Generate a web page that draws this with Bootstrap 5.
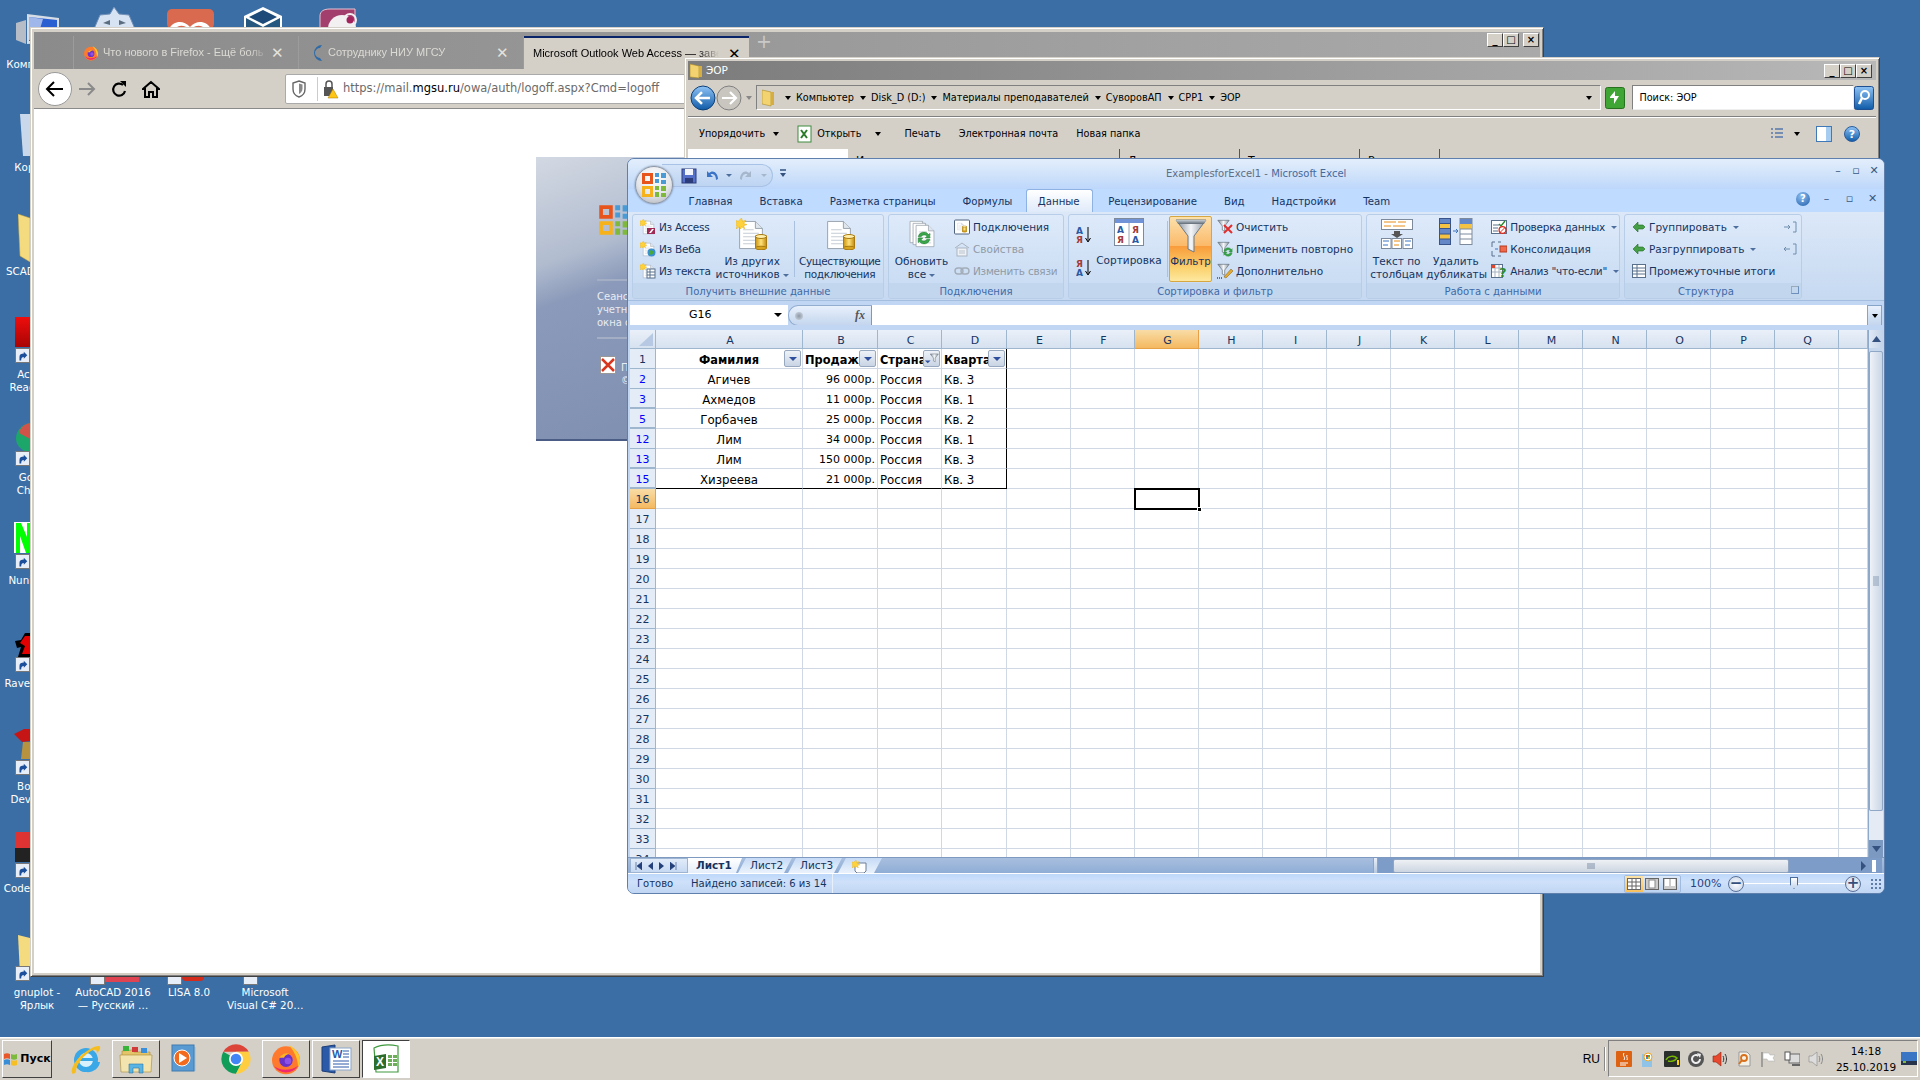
<!DOCTYPE html>
<html lang="ru">
<head>
<meta charset="UTF-8" />
<title>ExamplesforExcel1 - Microsoft Excel</title>
<link href="https://cdn.jsdelivr.net/npm/bootstrap@5.3.2/dist/css/bootstrap.min.css" rel="stylesheet" />
<style>
body{margin:0;width:1920px;height:1080px;overflow:hidden;background:#3a6ea5;font-family:"DejaVu Sans","Noto Sans",sans-serif;font-size:10.5px;line-height:1.2;color:#000}
.desktop{width:1920px;height:1080px}
.area{height:1037px}
.defs{position:absolute;width:0;height:0}
/* desktop icons */
.dicon{position:absolute;width:76px;color:#fff;text-align:center;font-size:10.3px;line-height:13px;white-space:nowrap}
.clip-top{position:absolute}
.shortcut{position:absolute;width:15px;height:15px;background:#e8eef7;border:1px solid #777}
/* classic windows */
.win{position:absolute;background:#d4d0c8;border:1px solid;border-color:#d4d0c8 #404040 #404040 #d4d0c8;box-shadow:inset 1px 1px 0 #fff,inset -1px -1px 0 #808080}
.capbtn{width:16px;height:14px;background:#d4d0c8;border:1px solid;border-color:#fff #404040 #404040 #fff;display:flex;align-items:center;justify-content:center;font-size:10px;line-height:10px;font-weight:700;color:#000}
.ff{left:30px;top:27px;width:1514px;height:950px;padding:4px 3px 3px 3px}
.ff-tabs{height:37px;background:linear-gradient(90deg,#8b8b8b,#a9a9a9)}
.ff-space{width:40px;border-right:1px solid #9c9c9c;margin-top:4px}
.ff-tab{width:225px;height:33px;margin-top:4px;padding:0 9px;color:#dcdad4;font-size:11px;font-family:"Liberation Sans",sans-serif;border-right:1px solid #9c9c9c}
.ff-tab svg{flex:none}
.ff-tab .tt{width:166px;overflow:hidden;white-space:nowrap;-webkit-mask-image:linear-gradient(90deg,#000 88%,transparent)}
.ff-tab .x{font-size:15px;color:#e4e2dc;margin-left:auto;margin-right:5px}
.ff-tab.on{background:#d4d0c8;color:#000;border-top:2px solid #0a246a;border-right:0;height:33px;padding-right:5px}
.ff-tab.on .tt{width:186px}
.ff-tab.on .x{color:#000;margin-right:3px}
.ff-plus{font-size:19px;color:#c9c9c9;margin-left:7px;line-height:1}
.ff-btns{margin:1px 1px 0 auto;height:14px}
.ff-bar{height:40px;border-bottom:1px solid #8a8a8a;padding-left:4px}
.ff-back{width:34px;height:34px;border-radius:50%;background:#fff;border:1px solid #999}
.ff-tool{width:32px}
.ff-tool.first{margin-left:-1px}
.ff-url{margin-left:118px;flex:1;height:30px;background:#fff;border:1px solid #aaa;border-radius:2px;font-size:11.5px;color:#6a6a6a;padding-left:6px;white-space:nowrap}
.ff-url b{font-weight:400;color:#000}
.ff-sep{width:1px;height:24px;background:#ccc;margin:0 5px 0 7px}
.ff-page{background:#fff}
.owa{position:absolute;left:502px;top:48px;width:230px;height:284px;background:linear-gradient(160deg,#d3d9e3 0%,#b1bccf 30%,#8b9aba 42%,#7d8dae 100%);border-right:2px solid #506080;border-bottom:2px solid #4b5d84;color:#e8ecf3;font-size:10px;line-height:13px;white-space:nowrap}
.owa hr{position:absolute;left:61px;width:160px;margin:0;border-top:2px solid #a3adc4;opacity:1}
.owa .t1{position:absolute;left:61px;top:133px}
.owa .t2{position:absolute;left:85px;top:204px}
.owa .logo{position:absolute;left:61px;top:47px}
.owa .exi{position:absolute;left:64px;top:199px}
/* explorer */
.ex{left:684px;top:57px;width:1196px;height:340px;padding:3px;font-size:9.7px}
.ex-cap{height:19px;background:linear-gradient(90deg,#7c7c7c,#b8b8b8);color:#fff;font-size:10.5px;font-weight:400;padding-left:2px}
.ex-addr{height:25px;margin-top:5px;padding:0 2px}
.ex-field{width:847px;height:25px;background:#d4d0c8;border:1px solid;border-color:#808080 #fff #fff #808080;font-size:9.7px;margin-left:4px;padding-left:5px}
.crumb{white-space:nowrap;margin-left:3px}
.tri{display:inline-block;width:0;height:0;border-left:3px solid transparent;border-right:3px solid transparent;border-top:4px solid #000;vertical-align:middle}
.crumb .tri{margin:0 5px 0 6px}
.search{width:222px;height:25px;background:#fff;border:1px solid;border-color:#808080 #eee #eee #808080;margin-left:7px;padding-left:6px;font-size:9.7px}
.ex-rule{height:2px;border-top:1px solid #808080;border-bottom:1px solid #fff;margin-top:6px}
.ex-tools{height:31px;padding-left:11px;font-size:9.7px}
.ex-tools .gap18{margin-left:18px}
.ex-list{height:220px}
.ex-pane{width:160px;background:#fff;height:100%}
.ex-col{padding-left:8px;border-right:1px solid #555;height:24px;padding-top:5px;font-size:11px}
.ex-c1{width:272px}.ex-c2{width:120px}.ex-c3{width:120px}.ex-c4{width:80px}
/* excel */
.xl{position:absolute;left:627px;top:158px;width:1258px;height:736px;border:1px solid #5f80ad;border-radius:7px;background:#bfdbff;overflow:hidden;font-size:10.5px;color:#15345f}
.xl-title{height:30px;background:linear-gradient(#e3eefc,#cfe2fa 55%,#bdd7fb)}
.orb{position:absolute;left:7px;top:7px;width:38px;height:38px;border-radius:50%;background:radial-gradient(circle at 50% 30%,#fff,#e4e6ea 55%,#a9aeb6);border:1px solid #8d97a6;box-shadow:0 0 2px #5d6f88;z-index:3}
.qat{margin-left:34px;width:111px;height:23px;margin-top:5px;background:linear-gradient(#d5e4f8,#bdd4f2);border:1px solid #a7c2e6;border-left:0;border-radius:0 12px 12px 0;padding-left:19px}
.qat-more{margin-left:6px}
.xl-name{position:absolute;left:538px;top:9px;color:#5f6f85;font-size:10px;white-space:nowrap}
.xl-name b{font-weight:400;color:#46699b}
.xl-wbtn{margin-left:auto;margin-right:4px;margin-top:5px;gap:6px;color:#39597f;font-size:11px}
.xl-wbtn i{font-style:normal;width:12px;text-align:center}
.xl-tabs{height:23px;padding-left:47px;background:#bfdbff}
.xl-tabs .nav-link{padding:6px 13.5px 0;color:#15345f;font-size:10.2px;height:23px;line-height:13px;border:0}
.xl-tabs .nav-link.active{background:linear-gradient(#fff,#dfeafa);color:#15345f;border:1px solid #8db2e3;border-bottom:0;border-radius:3px 3px 0 0;padding:5px 12px 0 11px;margin:0 2px 0 0}
.xl-help{margin-left:auto;gap:10px;margin-right:5px;margin-top:2px;color:#39597f;font-size:11px;height:16px}
.xl-help i{font-style:normal;width:13px;text-align:center}
.help-q{width:14px;height:14px;border-radius:50%;background:radial-gradient(circle at 40% 30%,#8fc0f0,#1e5cab);color:#fff;font-size:10px;font-weight:700;text-align:center;line-height:14px}
.xl-ribbon{height:88px;padding:2px 0 2px 4px;gap:4px;background:linear-gradient(#dce8f8,#c6d9f1)}
.rg{height:85px;border:1px solid #b8cde8;border-radius:3px;background:linear-gradient(#deeafa,#cfe0f5 60%,#c6daf2);overflow:hidden}
.rg-body{height:68px}
.rg-label{height:15px;background:#c2d6ee;color:#3e6aa8;text-align:center;font-size:10.1px;line-height:17px;position:relative}
.rg-label.pr{padding-right:14px}
.launch{position:absolute;right:2px;top:3px;width:8px;height:8px;border:1px solid #6c8fbc;border-top-color:#9ab;border-left-color:#9ab}
.g1{width:252px}.g2{width:176px}.g3{width:294px}.g4{width:254px}.g5{width:178px}
.scol{padding-top:1px}
.sbtn{height:22px;white-space:nowrap;gap:3px;color:#15345f}
.sbtn svg{flex:none}
.sbtn.off{color:#8f9aa6}
.tight{letter-spacing:-.25px}
.lbtn{text-align:center;padding-top:3px;color:#15345f;line-height:13px}
.lbtn svg{display:block;margin:0 auto 3px}
.rsep{width:1px;height:56px;margin:6px 1px 0;background:#a9c1df}
.w-other{width:84px}.w-exist{width:88px;letter-spacing:-.4px}.w-ref{width:65px}.w-sort{width:74px}.w-tx{width:62px}.w-dup{width:59px}
.ml7{margin-left:7px}.ml6{margin-left:6px}.ml4{margin-left:4px}
.filter{width:43px;height:66px;margin:1px 1px 0 0;border:1px solid #d6a640;border-radius:2px;background:linear-gradient(#fce0ab,#fbb969 45%,#f99c3c 46%,#fbd26f 80%,#fde8a0);padding-top:1px;text-align:center;color:#15345f;font-size:10.3px;line-height:13px}
.filter svg{display:block;margin:0 auto 2px}
.caret{display:inline-block;width:0;height:0;border-left:3px solid transparent;border-right:3px solid transparent;border-top:3px solid #4e6f9e;vertical-align:middle;margin-left:3px}
.xl-fbar{height:25px;padding:4px 2px 0 2px;background:#c0d6f2;border-top:1px solid #a4bedf}
.nbox{width:158px;height:21px;background:#fff;font-size:11px;color:#000;padding-left:59px;border-bottom:1px solid #86a3c8}
.nbox .tri{margin-left:auto;margin-right:6px;border-left-width:4px;border-right-width:4px;border-top-width:4px}
.fxbox{width:84px;height:21px;border-radius:10px 0 0 10px;background:linear-gradient(#e8f0fb,#c4d6ee);border:1px solid #93add0;border-right:1px solid #7c98bd;padding:0 6px}
.fxbox em{margin-left:auto;font-family:"Liberation Serif",serif;font-style:italic;font-weight:700;font-size:12px;color:#555}
.fxdot{width:8px;height:8px;border-radius:50%;background:radial-gradient(#8d99a8,#d5dce6)}
.fval{flex:1;height:21px;background:#fff;border-bottom:1px solid #86a3c8}
.fexp{width:15px;height:21px;background:linear-gradient(#e8f0fb,#c4d6ee);border:1px solid #86a3c8}
.fgap{height:5px;background:#c0d6f2}
.xl-sheet{height:527px;padding-left:2px;background:#c0d6f2}
.grid{display:grid;grid-template-columns:26px 147px 75px 64px 65px repeat(13,64px) 29px;grid-template-rows:19px;grid-auto-rows:20px;width:1238px;height:527px;overflow:hidden;background:#fff;font-size:11.8px;color:#000}
.c{border-right:1px solid #d0d7e5;border-bottom:1px solid #d0d7e5;padding:0 2px;line-height:22px;white-space:nowrap;overflow:hidden;position:relative}
.hc{background:linear-gradient(#eaf0f9,#d6e1f0);border-right:1px solid #9eb6ce;border-bottom:1px solid #9eb6ce;text-align:center;line-height:22px;color:#15345f;padding:0 0 0 2px;height:19px;font-size:11px;overflow:hidden}
.hr{background:#e4ecf7;border-right:1px solid #9eb6ce;border-bottom:1px solid #9eb6ce;text-align:center;line-height:22px;padding:0;color:#15345f;font-size:11px;overflow:hidden}
.hr.blue{color:#0000ff}
.hr.jump{border-bottom:2px solid #9eb6ce}
.hsel{background:linear-gradient(#f9dca6,#f4b961);border-color:#e6a046;color:#15345f}
.bold{font-weight:700;font-size:11.4px}
.r{text-align:right;font-size:11px}.m{text-align:center}
.bk-r{border-right:1px solid #000}
.bk-b{border-bottom:1px solid #000}
.fb{position:absolute;right:1px;top:1px;width:17px;height:17px;background:linear-gradient(#eef2f8,#c9d4e4);border:1px solid #98a8bf;border-radius:2px}
.fb::after{content:"";position:absolute;left:4px;top:6px;border-left:4px solid transparent;border-right:4px solid transparent;border-top:4px solid #2f4f9e}
.fb.on::after{display:none}
.sel{overflow:visible;outline:2px solid #000;outline-offset:-1px;z-index:2}
.sel::after{content:"";position:absolute;right:-4px;bottom:-4px;width:5px;height:5px;background:#000;border:1px solid #fff}
.vs{width:15px;height:527px;background:#c6d6ec;border-left:1px solid #8fa9cb;position:relative}
.vs .arr{height:18px;background:linear-gradient(90deg,#dfe8f5,#c3d3e9)}
.vs .th{height:460px;margin:3px 0 0;border:1px solid #90a7c6;border-radius:2px;background:linear-gradient(90deg,#eef2f8,#c9d5e6)}
.vs .tr{height:29px;background:#e4ebf5}
.vs .ar2{height:17px;background:#7c99c2}
.xl-tbar{height:16px;padding-left:2px;background:linear-gradient(#a8bfdf,#8fadd5);border-top:1px solid #7e9ac0}
.nav-arrows{width:58px;background:linear-gradient(#e1ebf9,#c6d9f2);border:1px solid #9db4d3;gap:6px;padding-left:4px}
.stab{height:15px;margin-left:-4px;padding:0 14px 0 14px;font-size:10.5px;color:#15345f;background:linear-gradient(#c6dbf6,#eaf2fc);clip-path:polygon(8px 0,100% 0,calc(100% - 0px) 0,calc(100% - 8px) 100%,0 100%);line-height:14px}
.stab.on{background:linear-gradient(#fff,#e5eefa);font-weight:700;width:54px;margin-left:0;padding:0 8px;clip-path:polygon(0 0,100% 0,calc(100% - 6px) 100%,0 100%)}
.stab.t2{width:54px;text-align:center;padding:0 12px}
.stab.t3{width:54px;text-align:center;padding:0 12px}
.stab.t4{width:44px;padding:0 8px 0 14px}
.hs{margin-left:auto;width:509px;height:15px;margin-right:2px;background:#7d9cc7}
.hs-split{width:5px;height:15px;background:linear-gradient(#e9eff8,#b6c8e0);border:1px solid #8ba4c7;border-top:0;border-bottom:0}
.hs-th{width:396px;height:14px;margin-left:15px;border:1px solid #90a5c2;border-radius:2px;background:linear-gradient(#eef1f5,#ccd5e1)}
.hs-right{margin-left:auto;width:0;height:0;border-top:5px solid transparent;border-bottom:5px solid transparent;border-left:5px solid #34517f}
.hs-split2{width:4px;height:12px;background:#fff;margin:0 6px 0 6px}
.xl-status{height:20px;background:linear-gradient(#bdd8fa,#cfe1fa 40%,#c0d6f3);color:#15345f;font-size:10px;border-top:1px solid #fff;padding-left:9px;white-space:nowrap}
.st-a{width:54px}.st-b{width:142px;border-right:1px solid #e8f0fb;height:100%}
.views{margin-left:auto;width:57px;height:18px;background:linear-gradient(#dce9fa,#bcd3f1);border:1px solid #a0bbdd;border-radius:2px}
.view{width:18px;height:100%}
.view.on{background:linear-gradient(#fce3a8,#f9c15d)}
.zoom-t{width:38px;margin-left:9px;color:#2a3f7d;font-size:11px}
.zb{width:16px;height:16px;border-radius:50%;background:radial-gradient(#fff,#c0cfe4);border:1px solid #5b7299;font-size:15px;font-weight:700;line-height:13px;text-align:center;color:#36507c;flex:none}
.slider{width:101px;height:1px;background:#fff;position:relative}
.thumb{position:absolute;left:46px;top:-6px;width:8px;height:12px;background:linear-gradient(#fff,#c5d5ea);border:1px solid #4c6c9d;clip-path:polygon(0 0,100% 0,100% 65%,50% 100%,0 65%)}
.sgrip{width:12px;height:12px;margin:0 2px 0 9px;background-image:radial-gradient(circle,#5f7ca6 1px,transparent 1.4px);background-size:4px 4px}
/* taskbar */
.taskbar{height:43px;background:#d4d0c8;border-top:1px solid #fff;padding:2px 2px 3px 2px;box-shadow:inset 0 1px 0 #eceae4}
.tb{height:38px;width:48px;background:#d4d0c8;margin-right:2px;flex:none}
.tb.up{border:1px solid;border-color:#fff #404040 #404040 #fff}
.tb.down{background:#fff;border:1px solid;border-color:#404040 #fff #fff #404040}
.start{width:50px;font-weight:700;font-size:11px;gap:2px;margin-right:10px}
.tb-mp{margin-right:4px}
.tb-ex{margin-right:0}
.lang{margin-left:auto;font-size:12px;font-family:"Liberation Sans",sans-serif;padding-right:4px;border-right:1px solid #888;height:24px;line-height:24px;box-shadow:1px 0 0 #fff}
.tray{margin-left:3px;width:310px;height:37px;border:1px solid;border-color:#808080 #fff #fff #808080;padding-left:7px;gap:8px}
.tray svg{flex:none}
.clock{width:66px;margin-left:1px;text-align:center;font-size:10.5px;line-height:16px;margin-right:-6px;flex:none}
</style>
</head>
<body>
<svg class="defs" aria-hidden="true">
  <defs>
    <linearGradient id="gCan" x1="0" x2="1" y1="0" y2="0"><stop offset="0" stop-color="#c9920f"/><stop offset=".5" stop-color="#ffe27a"/><stop offset="1" stop-color="#c48a10"/></linearGradient>
    <linearGradient id="gFun" x1="0" x2="1" y1="0" y2="0"><stop offset="0" stop-color="#7f8a94"/><stop offset=".5" stop-color="#f4f6f8"/><stop offset="1" stop-color="#8a949e"/></linearGradient>
    <linearGradient id="gFunS" x1="0" x2="0" y1="0" y2="1"><stop offset="0" stop-color="#c5ccd3"/><stop offset="1" stop-color="#5f6b76"/></linearGradient>
    <linearGradient id="gBlue" x1="0" x2="0" y1="0" y2="1"><stop offset="0" stop-color="#8fc3f5"/><stop offset="1" stop-color="#0f5ba8"/></linearGradient>
    <linearGradient id="gRed" x1="0" x2="0" y1="0" y2="1"><stop offset="0" stop-color="#ef0d0d"/><stop offset="1" stop-color="#a80404"/></linearGradient>
    <symbol id="spark" viewBox="0 0 10 10"><path d="M5 0l1 3 3-1-2 3 3 1-3 1 1 3-3-2-1 3-1-3-3 2 1-3-3-1 3-1-2-3 3 1z" fill="#ffd23c" stroke="#e3a90e" stroke-width=".4"/></symbol>
    <symbol id="page" viewBox="0 0 32 32"><path d="M3 .5h18l8 8v23H3z" fill="#fff" stroke="#8f99a5"/><path d="M21 .5v8h8" fill="#dfe5ec" stroke="#8f99a5"/><path d="M7 10h12M7 14h18M7 18h18M7 22h18M7 26h18" stroke="#bcc5cf"/></symbol>
    <symbol id="can" viewBox="0 0 12 16"><rect x=".5" y="2" width="11" height="12" fill="url(#gCan)" stroke="#a87a10"/><ellipse cx="6" cy="2.500" rx="5.500" ry="2" fill="#ffeeaa" stroke="#a87a10"/><ellipse cx="6" cy="14" rx="5.500" ry="1.800" fill="#d9a51f" stroke="#a87a10"/></symbol>
    <symbol id="funnel" viewBox="0 0 16 16"><path d="M1 1h14L9.500 8v6.500l-3-1.500V8z" fill="url(#gFun)" stroke="#5e6a75" stroke-width=".8"/></symbol>
    <symbol id="arrows" viewBox="0 0 12 12"><path d="M1 5a5 5 0 0 1 9-2l1-1v4H7l1.500-1.500A3 3 0 0 0 3.500 5z" fill="#3aa54a" stroke="#1c7a2c" stroke-width=".4"/><path d="M11 7a5 5 0 0 1-9 2l-1 1V6h4L3.500 7.500A3 3 0 0 0 8.500 7z" fill="#3aa54a" stroke="#1c7a2c" stroke-width=".4"/></symbol>
    <symbol id="sc" viewBox="0 0 15 15"><path d="M4 12V8c0-3 2-4 5-4V2l4 4-4 4V8c-2 0-3 1-3 4z" fill="#1b4f9c"/></symbol>
    <symbol id="firefox" viewBox="0 0 48 48"><circle cx="24" cy="26" r="21" fill="#ff7a2c"/><path d="M6 34a21 21 0 0 0 36 0c-10 8-28 8-36 0z" fill="#f0296e"/><path d="M28 3c10 5 17 14 17 23 0 4-1 7-3 10 0-10-4-22-14-33z" fill="#ffc72c"/><circle cx="24" cy="26" r="10" fill="#6a32c9"/><path d="M14 22c3-6 10-8 15-6-4 1-7 3-8 6-2 0-5 0-7 0z" fill="#ffb321"/><circle cx="27" cy="27" r="5" fill="#8f52e8"/></symbol>
    <symbol id="chrome" viewBox="0 0 48 48"><path d="M4.950 13A22 22 0 0 1 43.050 13H24z" fill="#db4437"/><path d="M4.950 13A22 22 0 0 0 24 46l9-17z" fill="#0f9d58"/><path d="M43.050 13A22 22 0 0 1 24 46l9-17-9-16z" fill="#ffcd40"/><circle cx="24" cy="24" r="10.500" fill="#fff"/><circle cx="24" cy="24" r="8" fill="#4285f4"/></symbol>
    <symbol id="offlogo" viewBox="0 0 26 26"><path d="M1 1h11v11H1zM4 4v5h5V4z" fill="#e8551c" fill-rule="evenodd"/><path d="M14 1h4v4h-4zM20 1h5v5h-5zM14 7h4v4h-4zM20 8h5v4h-5z" fill="#4a9ad6"/><path d="M1 14h11v11H1zM4 17v5h5v-5z" fill="#f6b21b" fill-rule="evenodd"/><path d="M14 14h4v4h-4zM20 14h5v5h-5zM14 20h4v5h-4zM20 21h5v4h-5z" fill="#7fb93c"/></symbol>
  </defs>
</svg>

<div class="desktop d-flex flex-column">
  <div class="area position-relative">

    <!-- desktop icons, partly under the windows -->
    <svg class="clip-top" style="left:15px;top:11px" width="46" height="34" viewBox="0 0 46 34"><path d="M12 3L44 7v24L12 33z" fill="#d7dde6"/><path d="M14 6l28 3v18l-28 3z" fill="#2a5fd1"/><path d="M14 6l14 2-6 20-8 1z" fill="#fff" opacity=".55"/><path d="M1 12l10-3v24l-10-4z" fill="#b7bdc6"/></svg>
    <svg class="clip-top" style="left:93px;top:7px" width="43" height="22" viewBox="0 0 43 22"><path d="M21 0l5 7 10 1 6 14H1L7 8l10-1z" fill="#d7e3f2" stroke="#6f90b8"/><path d="M10 16l7-3v5zM33 16l-7-3v5z" fill="#5b6d80"/></svg>
    <svg class="clip-top" style="left:167px;top:9px" width="47" height="20" viewBox="0 0 47 20"><rect width="47" height="20" rx="5" fill="#d9694f"/><path d="M2 20c4-8 14-10 21-2 7-8 17-6 21 2h-6c-4-5-10-4-15 1-5-5-11-6-15-1z" fill="#fff"/></svg>
    <svg class="clip-top" style="left:243px;top:7px" width="40" height="22" viewBox="0 0 40 22"><path d="M20 0l19 9v13H1V9z" fill="#fff"/><path d="M20 3l14 7-14 7-14-7z" fill="#1d4a78"/><path d="M3 11l17 9 17-9v11H3z" fill="#25577f"/></svg>
    <svg class="clip-top" style="left:318px;top:8px" width="43" height="21" viewBox="0 0 43 21"><path d="M2 21V8C2 3 6 1 12 1h25v20z" fill="#a33f6d" stroke="#e6c4d4"/><circle cx="24" cy="21" r="14" fill="#f3f0f2"/><circle cx="32" cy="12" r="3.500" fill="#a3245c"/><circle cx="32" cy="12" r="6" fill="none" stroke="#f3f0f2" stroke-width="2"/></svg>

    <div class="dicon" style="left:-1px;top:58px">Компьютер</div>
    <svg class="clip-top" style="left:20px;top:114px" width="10" height="42" viewBox="0 0 10 42"><path d="M0 0h10v42H3z" fill="#c9d8ea"/></svg>
    <div class="dicon" style="left:-1px;top:161px">Корзина</div>
    <svg class="clip-top" style="left:18px;top:214px" width="12" height="48" viewBox="0 0 12 48"><path d="M0 0l12 4v44L2 42z" fill="#f5db80" stroke="#b99a3c" stroke-width=".5"/></svg>
    <div class="dicon" style="left:-1px;top:265px">SCAD Office<br>21</div>
    <svg class="clip-top" style="left:15px;top:317px" width="15" height="30" viewBox="0 0 15 30"><rect width="15" height="30" fill="url(#gRed)"/></svg>
    <div class="shortcut" style="left:15px;top:348px"><svg width="13" height="13"><use href="#sc"/></svg></div>
    <div class="dicon" style="left:-1px;top:368px">Acrobat<br>Reader DC</div>
    <svg class="clip-top" style="left:16px;top:423px" width="14" height="30" viewBox="0 0 14 30"><path d="M14 0C6 1 0 8 0 15c0 7 4 12 14 15z" fill="#1da66a"/><path d="M14 0C8 1 4 5 3 10l11 6z" fill="#d0534a"/></svg>
    <div class="shortcut" style="left:15px;top:451px"><svg width="13" height="13"><use href="#sc"/></svg></div>
    <div class="dicon" style="left:-1px;top:471px">Google<br>Chrome</div>
    <svg class="clip-top" style="left:14px;top:522px" width="16" height="31" viewBox="0 0 16 31"><rect width="16" height="31" fill="#fff"/><path d="M2 31V1h5l6 14V1h3v30h-4L6 14v17z" fill="#00ff00"/></svg>
    <div class="shortcut" style="left:15px;top:554px"><svg width="13" height="13"><use href="#sc"/></svg></div>
    <div class="dicon" style="left:-1px;top:574px">Nunit 2.6.4</div>
    <svg class="clip-top" style="left:15px;top:633px" width="15" height="24" viewBox="0 0 15 24"><path d="M0 8l6-1 4-7h5v24H3l3-10-4 1z" fill="#000"/><path d="M5 10l5-7h5v18H7l3-8z" fill="#e40000"/></svg>
    <div class="shortcut" style="left:15px;top:657px"><svg width="13" height="13"><use href="#sc"/></svg></div>
    <div class="dicon" style="left:-1px;top:677px">RaveReports</div>
    <svg class="clip-top" style="left:14px;top:729px" width="16" height="30" viewBox="0 0 16 30"><path d="M0 5L10 0h6v12L8 13z" fill="#c61515"/><path d="M9 13h7v17H7z" fill="#b8933f"/></svg>
    <div class="shortcut" style="left:15px;top:760px"><svg width="13" height="13"><use href="#sc"/></svg></div>
    <div class="dicon" style="left:-1px;top:780px">Borland<br>Developer</div>
    <svg class="clip-top" style="left:15px;top:832px" width="15" height="30" viewBox="0 0 15 30"><rect width="15" height="16" fill="#d33"/><rect y="16" width="15" height="14" fill="#222"/></svg>
    <div class="shortcut" style="left:15px;top:863px"><svg width="13" height="13"><use href="#sc"/></svg></div>
    <div class="dicon" style="left:-1px;top:882px">Code::Blocks</div>
    <svg class="clip-top" style="left:18px;top:935px" width="12" height="40" viewBox="0 0 12 40"><path d="M0 0l12 3v37H2z" fill="#f5db80"/></svg>
    <div class="shortcut" style="left:15px;top:966px"><svg width="13" height="13"><use href="#sc"/></svg></div>
    <div class="dicon" style="left:-1px;top:986px">gnuplot -<br>Ярлык</div>
    <div class="clip-top" style="left:105px;top:977px;width:34px;height:5px;background:#df4452"></div>
    <div class="shortcut" style="left:90px;top:970px"></div>
    <div class="dicon" style="left:75px;top:986px">AutoCAD 2016<br>— Русский …</div>
    <div class="clip-top" style="left:182px;top:977px;width:22px;height:4px;border-radius:0 0 12px 12px;background:#d32b1c"></div>
    <div class="shortcut" style="left:167px;top:970px"></div>
    <div class="dicon" style="left:151px;top:986px">LISA 8.0</div>
    <div class="shortcut" style="left:243px;top:970px"></div>
    <div class="dicon" style="left:227px;top:986px">Microsoft<br>Visual C# 20…</div>

    <!-- Firefox -->
    <div class="win ff d-flex flex-column">
      <div class="ff-tabs d-flex">
        <div class="ff-space"></div>
        <div class="ff-tab d-flex align-items-center">
          <svg width="16" height="18" class="me-1"><use href="#firefox"/></svg><span class="tt">Что нового в Firefox - Ещё боль</span><span class="x">✕</span>
        </div>
        <div class="ff-tab d-flex align-items-center">
          <svg width="16" height="20" viewBox="0 0 16 20" class="me-1"><path d="M14 2a8 8 0 1 0 0 16l-2-3a5 5 0 1 1 0-10z" fill="#2d6aa8"/></svg><span class="tt">Сотруднику НИУ МГСУ</span><span class="x">✕</span>
        </div>
        <div class="ff-tab on d-flex align-items-center">
          <span class="tt">Microsoft Outlook Web Access — заве</span><span class="x">✕</span>
        </div>
        <div class="ff-plus">+</div>
        <div class="ff-btns d-flex">
          <div class="capbtn">_</div><div class="capbtn">□</div><div class="capbtn ms-1">×</div>
        </div>
      </div>
      <div class="ff-bar d-flex align-items-center">
        <div class="ff-back d-flex align-items-center justify-content-center"><svg width="20" height="18" viewBox="0 0 20 18"><path d="M18 9H3M9 2L2 9l7 7" fill="none" stroke="#000" stroke-width="2"/></svg></div>
        <div class="ff-tool first d-flex justify-content-center"><svg width="18" height="16" viewBox="0 0 18 16"><path d="M1 8h15M10 2l6 6-6 6" fill="none" stroke="#8a8a8a" stroke-width="2"/></svg></div>
        <div class="ff-tool d-flex justify-content-center"><svg width="16" height="18" viewBox="0 0 16 18"><path d="M14 11a6 6 0 1 1-2-6" fill="none" stroke="#000" stroke-width="2.200"/><path d="M9 1h6v6z" fill="#000"/></svg></div>
        <div class="ff-tool d-flex justify-content-center"><svg width="18" height="18" viewBox="0 0 18 18"><path d="M9 2L1 9h2v8h4v-5h4v5h4V9h2z" fill="none" stroke="#000" stroke-width="2"/></svg></div>
        <div class="ff-url d-flex align-items-center">
          <svg width="14" height="18" viewBox="0 0 14 18" class="me-1"><path d="M7 1l6 2v6c0 4-3 7-6 8-3-1-6-4-6-8V3z" fill="#fff" stroke="#666" stroke-width="1.400"/><path d="M7 3.500l3.500 1v4c0 3-2 4.500-3.500 5.500z" fill="#888"/></svg>
          <div class="ff-sep"></div>
          <svg width="16" height="20" viewBox="0 0 16 20" class="me-1"><path d="M3 8V5a3 3 0 0 1 6 0v3" fill="none" stroke="#555" stroke-width="1.500"/><rect x="1" y="8" width="9" height="9" fill="#555"/><path d="M10 10l5 9H5z" fill="#ffc514" stroke="#a77a00" stroke-width=".5"/></svg>
          <span>https://mail.<b>mgsu.ru</b>/owa/auth/logoff.aspx?Cmd=logoff</span>
        </div>
      </div>
      <div class="ff-page flex-grow-1 position-relative">
        <div class="owa">
          <svg class="logo" width="34" height="32"><use href="#offlogo"/></svg>
          <hr style="top:122px" />
          <div class="t1">Сеанс<br>учетн<br>окна с</div>
          <hr style="top:180px" />
          <svg class="exi" width="16" height="18" viewBox="0 0 16 18"><rect x=".5" y=".5" width="15" height="17" fill="#fff" stroke="#999"/><path d="M2 3l12 12M14 3L2 15" stroke="#d8361e" stroke-width="2.500"/></svg>
          <div class="t2">П<br>©</div>
        </div>
      </div>
    </div>

    <!-- Explorer -->
    <div class="win ex">
      <div class="ex-cap d-flex align-items-center">
        <svg width="12" height="16" viewBox="0 0 12 16" class="me-1"><path d="M0 1l9 2v12L0 14z" fill="#f2d36f" stroke="#a98a2c" stroke-width=".6"/><path d="M9 3h3v11H9z" fill="#d6ad43"/></svg>ЭОР
        <div class="d-flex ms-auto me-1"><div class="capbtn">_</div><div class="capbtn">□</div><div class="capbtn">×</div></div>
      </div>
      <div class="ex-addr d-flex align-items-center">
        <svg width="27" height="26" viewBox="0 0 27 26"><circle cx="13" cy="13" r="12" fill="url(#gBlue)" stroke="#0e3f77"/><path d="M20 13H7M12 7l-6 6 6 6" fill="none" stroke="#fff" stroke-width="2.500"/></svg>
        <svg width="26" height="26" viewBox="0 0 26 26" style="margin-left:-1px"><circle cx="13" cy="13" r="12" fill="#c9c6c0" stroke="#808080"/><path d="M6 13h13M14 7l6 6-6 6" fill="none" stroke="#fff" stroke-width="2.200"/></svg>
        <span class="tri ms-1" style="border-top-color:#888"></span>
        <div class="ex-field d-flex align-items-center">
          <svg width="12" height="18" viewBox="0 0 12 18" class="me-2"><path d="M0 1l9 2v14L0 15z" fill="#f2d36f" stroke="#a98a2c" stroke-width=".6"/><path d="M9 3h3v13H9z" fill="#d6ad43"/></svg>
          <span class="crumb"><span class="tri" style="margin-left:0"></span>Компьютер<span class="tri"></span>Disk_D (D:)<span class="tri"></span>Материалы преподавателей<span class="tri"></span>СуворовАП<span class="tri"></span>СРР1<span class="tri"></span>ЭОР</span>
          <span class="tri ms-auto me-2"></span>
        </div>
        <svg width="20" height="22" viewBox="0 0 20 22" class="ms-1"><rect x=".5" y=".5" width="19" height="21" rx="2" fill="#3fa535" stroke="#25701d"/><path d="M5 10l5-6v5h4l-5 8v-6H5z" fill="#fff"/></svg>
        <div class="search d-flex align-items-center">Поиск: ЭОР</div>
        <svg width="20" height="24" viewBox="0 0 20 24"><rect x=".5" y=".5" width="19" height="23" rx="2" fill="url(#gBlue)" stroke="#1c4d92"/><circle cx="11" cy="9" r="4" fill="none" stroke="#fff" stroke-width="2"/><path d="M8 12l-3 6" stroke="#fff" stroke-width="2.500"/></svg>
      </div>
      <div class="ex-rule"></div>
      <div class="ex-tools d-flex align-items-center">
        <span>Упорядочить</span><span class="tri ms-2"></span>
        <svg width="16" height="18" viewBox="0 0 16 18" class="gap18"><rect x="1" y="1" width="13" height="16" fill="#fff" stroke="#3c8a3c"/><path d="M4 5l6 8M10 5l-6 8" stroke="#2a7b2a" stroke-width="2"/></svg>
        <span class="ms-1">Открыть</span><span class="tri" style="margin-left:14px"></span>
        <span style="margin-left:23px">Печать</span><span class="gap18">Электронная почта</span><span class="gap18">Новая папка</span>
        <svg width="14" height="12" viewBox="0 0 14 12" class="ms-auto"><path d="M1 1h2M1 5h2M1 9h2M5 1h8M5 5h8M5 9h8" stroke="#5577a8" stroke-width="1.500"/></svg>
        <span class="tri" style="margin:0 16px 0 10px"></span>
        <svg width="16" height="16" viewBox="0 0 16 16"><rect x=".5" y=".5" width="15" height="15" fill="#fff" stroke="#3f79b8"/><rect x="10" y="1" width="5" height="14" fill="#a6cdf0"/></svg>
        <svg width="16" height="16" viewBox="0 0 16 16" style="margin:0 16px 0 12px"><circle cx="8" cy="8" r="7.500" fill="url(#gBlue)" stroke="#2a5d9c"/><text x="8" y="12" text-anchor="middle" font-size="11" font-weight="700" fill="#fff">?</text></svg>
      </div>
      <div class="ex-list d-flex">
        <div class="ex-pane"></div>
        <div class="ex-col ex-c1">Имя</div><div class="ex-col ex-c2">Дата изменения</div><div class="ex-col ex-c3">Тип</div><div class="ex-col ex-c4">Размер</div>
      </div>
    </div>

    <!-- Excel -->
    <div class="xl d-flex flex-column">
      <div class="orb d-flex align-items-center justify-content-center"><svg width="26" height="26"><use href="#offlogo"/></svg></div>
      <div class="xl-title d-flex position-relative">
        <div class="qat d-flex align-items-center gap-1">
          <svg width="16" height="16" viewBox="0 0 16 16"><rect x="1" y="1" width="14" height="14" fill="#5570c8" stroke="#2c3c7a"/><rect x="4" y="1" width="8" height="6" fill="#f2f5fb"/><rect x="4" y="10" width="8" height="5" fill="#2c3c7a"/></svg>
          <svg width="15" height="14" viewBox="0 0 15 14" style="margin-left:3px"><path d="M3 2v6h6L6.500 5.500C9 4 12 6 12 11l2-1C14 4 9 0 5 4z" fill="#3b74c6"/></svg><span class="caret"></span>
          <svg width="15" height="14" viewBox="0 0 15 14" style="margin-left:3px"><path d="M12 2v6H6l2.500-2.500C6 4 3 6 3 11l-2-1C1 4 6 0 10 4z" fill="#a6b7cc"/></svg><span class="caret" style="border-top-color:#a6b7cc"></span>
        </div>
        <svg class="qat-more" width="8" height="10" viewBox="0 0 8 10" style="margin-top:10px"><path d="M1 1h6" stroke="#33527f" stroke-width="1.400"/><path d="M1 4h6L4 8z" fill="#33527f"/></svg>
        <div class="xl-name">ExamplesforExcel1 - <b>Microsoft Excel</b></div>
        <div class="xl-wbtn d-flex">
          <i>–</i><i>▫</i><i>✕</i>
        </div>
      </div>
      <div class="xl-tabs d-flex">
        <ul class="nav">
          <li class="nav-item"><a class="nav-link">Главная</a></li>
          <li class="nav-item"><a class="nav-link">Вставка</a></li>
          <li class="nav-item"><a class="nav-link">Разметка страницы</a></li>
          <li class="nav-item"><a class="nav-link">Формулы</a></li>
          <li class="nav-item"><a class="nav-link active">Данные</a></li>
          <li class="nav-item"><a class="nav-link">Рецензирование</a></li>
          <li class="nav-item"><a class="nav-link">Вид</a></li>
          <li class="nav-item"><a class="nav-link">Надстройки</a></li>
          <li class="nav-item"><a class="nav-link">Team</a></li>
        </ul>
        <div class="xl-help d-flex align-items-center"><div class="help-q">?</div><i>–</i><i>▫</i><i>✕</i></div>
      </div>
      <div class="xl-ribbon d-flex">
        <div class="rg g1">
          <div class="rg-body d-flex">
            <div class="scol ml7">
              <div class="sbtn tight d-flex align-items-center"><svg width="16" height="16" viewBox="0 0 16 16"><use href="#page" width="13" height="15" x="2" y="1"/><use href="#spark" width="7" height="7"/><path d="M7 9h8v6H7z" fill="#9e2b55"/><path d="M9 14l3-4h2l-3 4z" fill="#fff"/></svg>Из Access</div>
              <div class="sbtn tight d-flex align-items-center"><svg width="16" height="16" viewBox="0 0 16 16"><use href="#page" width="13" height="15" x="2" y="1"/><use href="#spark" width="7" height="7"/><circle cx="11.500" cy="11.500" r="4" fill="#3a8fd0"/><path d="M9 10c2-2 4 0 5 1-1 3-3 2-4 3z" fill="#47a83c"/></svg>Из Веба</div>
              <div class="sbtn tight d-flex align-items-center"><svg width="16" height="16" viewBox="0 0 16 16"><use href="#page" width="13" height="15" x="2" y="1"/><use href="#spark" width="7" height="7"/><rect x="7" y="6" width="8" height="9" fill="#fff" stroke="#59708c"/><path d="M7 9h8M7 12h8M10 6v9" stroke="#59708c"/></svg>Из текста</div>
            </div>
            <div class="lbtn w-other"><svg width="32" height="34" viewBox="0 0 32 34"><use href="#page" width="28" height="32" x="1" y="1"/><use href="#spark" width="11" height="11"/><use href="#can" width="12" height="16" x="19" y="16"/></svg>Из других<br>источников<span class="caret"></span></div>
            <div class="rsep"></div>
            <div class="lbtn w-exist"><svg width="32" height="34" viewBox="0 0 32 34"><use href="#page" width="28" height="32" x="1" y="1"/><use href="#can" width="12" height="16" x="19" y="16"/></svg>Существующие<br>подключения</div>
          </div>
          <div class="rg-label">Получить внешние данные</div>
        </div>
        <div class="rg g2">
          <div class="rg-body d-flex">
            <div class="lbtn w-ref"><svg width="32" height="34" viewBox="0 0 32 34"><use href="#page" width="22" height="26" x="2" y="1"/><use href="#page" width="22" height="26" x="5" y="3"/><use href="#page" width="22" height="26" x="8" y="5"/><use href="#arrows" width="14" height="14" x="11" y="13"/></svg>Обновить<br>все<span class="caret"></span></div>
            <div class="scol">
              <div class="sbtn d-flex align-items-center"><svg width="16" height="16" viewBox="0 0 16 16"><rect x=".5" y="1" width="15" height="14" rx="1" fill="#fff" stroke="#50627c"/><use href="#page" width="7" height="9" x="3" y="3"/><use href="#can" width="5" height="8" x="8" y="6"/></svg>Подключения</div>
              <div class="sbtn off d-flex align-items-center"><svg width="16" height="16" viewBox="0 0 16 16"><path d="M1 7l7-5 7 5" fill="none" stroke="#a9b3bf"/><rect x="3" y="7" width="10" height="8" fill="#eef2f7" stroke="#a9b3bf"/><path d="M5 10h6M5 12h6" stroke="#b9c2cc"/></svg>Свойства</div>
              <div class="sbtn off tight d-flex align-items-center"><svg width="16" height="16" viewBox="0 0 16 16"><rect x="1" y="5" width="8" height="6" rx="3" fill="none" stroke="#a3adb9" stroke-width="1.400"/><rect x="7" y="5" width="8" height="6" rx="3" fill="none" stroke="#a3adb9" stroke-width="1.400"/></svg>Изменить связи</div>
            </div>
          </div>
          <div class="rg-label">Подключения</div>
        </div>
        <div class="rg g3">
          <div class="rg-body d-flex">
            <div class="scol ml7">
              <svg width="16" height="24" viewBox="0 0 16 24" class="d-block mt-2"><text x="0" y="10" font-size="9" font-weight="700" fill="#2a5aa5">А</text><text x="0" y="19" font-size="9" font-weight="700" fill="#a33a3a">Я</text><path d="M12 3v14M9.500 14l2.500 4 2.500-4" fill="none" stroke="#000"/></svg>
              <svg width="16" height="24" viewBox="0 0 16 24" class="d-block" style="margin-top:9px"><text x="0" y="10" font-size="9" font-weight="700" fill="#a33a3a">Я</text><text x="0" y="19" font-size="9" font-weight="700" fill="#2a5aa5">А</text><path d="M12 3v14M9.500 14l2.500 4 2.500-4" fill="none" stroke="#000"/></svg>
            </div>
            <div class="lbtn w-sort"><svg width="30" height="30" viewBox="0 0 30 30" style="margin-bottom:6px"><rect x=".5" y=".5" width="29" height="27" fill="#fff" stroke="#7c8a9c"/><rect x="1" y="1" width="28" height="4" fill="#6f93d6"/><path d="M15 5v22" stroke="#9aa6b5"/><text x="3" y="15" font-size="9" font-weight="700" fill="#2a5aa5">А</text><text x="3" y="25" font-size="9" font-weight="700" fill="#a33a3a">Я</text><text x="18" y="15" font-size="9" font-weight="700" fill="#a33a3a">Я</text><text x="18" y="25" font-size="9" font-weight="700" fill="#2a5aa5">А</text></svg>Сортировка</div>
            <div class="rsep"></div>
            <div class="filter ml7"><svg width="32" height="35" viewBox="0 0 32 35"><path d="M1 2h30L19 18v16l-6-3V18z" fill="url(#gFun)" stroke="#6d7884"/><path d="M1 2h30l-2 4H3z" fill="url(#gFunS)"/></svg>Фильтр</div>
            <div class="scol ml4">
              <div class="sbtn d-flex align-items-center"><svg width="16" height="16" viewBox="0 0 16 16"><use href="#funnel" width="13" height="14"/><path d="M7 6l8 8M15 6l-8 8" stroke="#e22d2d" stroke-width="2"/></svg>Очистить</div>
              <div class="sbtn d-flex align-items-center"><svg width="16" height="16" viewBox="0 0 16 16"><use href="#funnel" width="13" height="14"/><use href="#arrows" width="10" height="10" x="6" y="6"/></svg>Применить повторно</div>
              <div class="sbtn d-flex align-items-center"><svg width="16" height="16" viewBox="0 0 16 16"><use href="#funnel" width="13" height="14"/><path d="M7 14l7-8 2 2-7 7z" fill="#e7a92b" stroke="#7c5e1a" stroke-width=".5"/><path d="M0 15h6" stroke="#000" stroke-dasharray="1 1"/></svg>Дополнительно</div>
            </div>
          </div>
          <div class="rg-label">Сортировка и фильтр</div>
        </div>
        <div class="rg g4">
          <div class="rg-body d-flex">
            <div class="lbtn w-tx"><svg width="32" height="32" viewBox="0 0 32 32" style="margin-bottom:5px"><rect x=".5" y="1.500" width="31" height="10" fill="#fff" stroke="#7c8a9c"/><path d="M3 4h12M17 4h8M3 8h7M12 8h12" stroke="#e78c19"/><path d="M13 13h6v3h3l-6 4-6-4h3z" fill="#555"/><rect x=".5" y="20.500" width="9.500" height="10" fill="#fff" stroke="#7c8a9c"/><rect x="11" y="20.500" width="9.500" height="10" fill="#fff" stroke="#7c8a9c"/><rect x="22" y="20.500" width="9.500" height="10" fill="#fff" stroke="#7c8a9c"/><path d="M2 23h6M2 27h5M24 23h6M24 27h5" stroke="#3b74c6"/><path d="M13 23h6M13 27h5" stroke="#e78c19"/></svg>Текст по<br>столбцам</div>
            <div class="lbtn w-dup"><svg width="34" height="28" viewBox="0 0 34 28" style="margin-bottom:9px"><rect x=".5" y=".5" width="11" height="26" fill="#6487c7" stroke="#38548a"/><path d="M1 5.500h10v5H1zM1 16h10v5H1z" fill="#f4c343"/><path d="M1 5.500h10M1 10.500h10M1 16h10M1 21h10" stroke="#38548a"/><path d="M14 13h5l-2-2m2 2l-2 2" fill="none" stroke="#3b74c6"/><rect x="21" y=".5" width="12" height="26" fill="#fff" stroke="#7c8a9c"/><rect x="21" y="1" width="12" height="5" fill="#6487c7"/><rect x="21" y="6" width="12" height="5" fill="#f4c343"/><path d="M21 11h12M21 16h12M21 21h12" stroke="#7c8a9c"/></svg>Удалить<br>дубликаты</div>
            <div class="scol ml6">
              <div class="sbtn tight d-flex align-items-center"><svg width="16" height="16" viewBox="0 0 16 16"><rect x=".5" y="1.500" width="15" height="13" fill="#fff" stroke="#59708c"/><path d="M2 6h6M2 9h5M2 12h5" stroke="#59708c"/><path d="M8 5l2 2 4-5" fill="none" stroke="#2d8a2d" stroke-width="1.400"/><circle cx="11.500" cy="11" r="3.400" fill="#fff" stroke="#dd2b1c" stroke-width="1.300"/><path d="M9 13.500L14 8.500" stroke="#dd2b1c"/></svg>Проверка данных<span class="caret"></span></div>
              <div class="sbtn d-flex align-items-center"><svg width="16" height="16" viewBox="0 0 16 16"><path d="M4 1H1v5M4 15H1v-5M7 1h3M7 15h3" fill="none" stroke="#59708c"/><path d="M4 8h3" stroke="#3b74c6"/><rect x="9" y="5" width="7" height="6" fill="#ef6a4c" stroke="#b53b23"/></svg>Консолидация</div>
              <div class="sbtn tight d-flex align-items-center"><svg width="16" height="16" viewBox="0 0 16 16"><rect x=".5" y="1.500" width="11" height="13" fill="#fff" stroke="#59708c"/><path d="M1 5h10M1 9h10M4 2v12M8 2v12" stroke="#a7b3c2"/><rect x="1" y="2" width="3" height="3" fill="#e0462e"/><text x="8" y="14" font-size="13" font-weight="700" fill="#2d8a2d">?</text></svg>Анализ "что-если"<span class="caret"></span></div>
            </div>
          </div>
          <div class="rg-label">Работа с данными</div>
        </div>
        <div class="rg g5">
          <div class="rg-body d-flex">
            <div class="scol ml7">
              <div class="sbtn d-flex align-items-center"><svg width="14" height="14" viewBox="0 0 14 14"><path d="M1 7l5-5v3h5l2 2-2 2H6v3z" fill="#45a045" stroke="#226b22" stroke-width=".6"/></svg>Группировать<span class="caret"></span></div>
              <div class="sbtn d-flex align-items-center"><svg width="14" height="14" viewBox="0 0 14 14"><path d="M1 7l5-5v3h5l2 2-2 2H6v3z" fill="#45a045" stroke="#226b22" stroke-width=".6"/></svg>Разгруппировать<span class="caret"></span></div>
              <div class="sbtn d-flex align-items-center"><svg width="14" height="14" viewBox="0 0 14 14"><rect x=".5" y=".5" width="13" height="13" fill="#fff" stroke="#59708c"/><path d="M1 4h12M1 7h12M1 10h12M5 1v12" stroke="#59708c"/></svg>Промежуточные итоги</div>
            </div>
            <div class="scol ms-auto me-1">
              <div class="sbtn d-flex align-items-center"><svg width="14" height="14" viewBox="0 0 14 14"><path d="M1 7h6M5 5l2 2-2 2M10 2h3v10h-3" fill="none" stroke="#6e8dad"/></svg></div>
              <div class="sbtn d-flex align-items-center"><svg width="14" height="14" viewBox="0 0 14 14"><path d="M7 7H1M3 5L1 7l2 2M10 2h3v10h-3" fill="none" stroke="#6e8dad"/></svg></div>
            </div>
          </div>
          <div class="rg-label pr">Структура<span class="launch"></span></div>
        </div>
      </div>
      <div class="xl-fbar d-flex">
        <div class="nbox d-flex align-items-center">G16<span class="tri"></span></div>
        <div class="fxbox d-flex align-items-center"><span class="fxdot"></span><em>fx</em></div>
        <div class="fval"></div>
        <div class="fexp d-flex align-items-center justify-content-center"><span class="tri"></span></div>
      </div>
      <div class="fgap"></div>
      <div class="xl-sheet d-flex">
        <div class="grid" id="grid"></div>
        <div class="vs">
          <div class="arr d-flex align-items-center justify-content-center"><svg width="9" height="6" viewBox="0 0 9 6"><path d="M0 6l4.500-6L9 6z" fill="#34517f"/></svg></div>
          <div class="th d-flex align-items-center justify-content-center"><svg width="8" height="10" viewBox="0 0 8 10"><path d="M1 1h6M1 3h6M1 5h6M1 7h6M1 9h6" stroke="#8a9cb5"/></svg></div>
          <div class="tr"></div>
          <div class="ar2 d-flex align-items-center justify-content-center"><svg width="9" height="6" viewBox="0 0 9 6"><path d="M0 0l4.500 6L9 0z" fill="#34517f"/></svg></div>
        </div>
      </div>
      <div class="xl-tbar d-flex">
        <div class="nav-arrows d-flex align-items-center">
          <svg width="7" height="8" viewBox="0 0 7 8"><path d="M1 0v8M7 0L2 4l5 4z" fill="#23407a" stroke="#23407a" stroke-width=".6"/></svg>
          <svg width="5" height="8" viewBox="0 0 5 8"><path d="M5 0L0 4l5 4z" fill="#23407a"/></svg>
          <svg width="5" height="8" viewBox="0 0 5 8"><path d="M0 0l5 4-5 4z" fill="#23407a"/></svg>
          <svg width="7" height="8" viewBox="0 0 7 8"><path d="M6 0v8M0 0l5 4-5 4z" fill="#23407a" stroke="#23407a" stroke-width=".6"/></svg>
        </div>
        <div class="stab on">Лист1</div>
        <div class="stab t2">Лист2</div>
        <div class="stab t3">Лист3</div>
        <div class="stab t4"><svg width="15" height="13" viewBox="0 0 15 13"><path d="M3 3h11v8l-2 2H5l-2-2z" fill="#fff" stroke="#6a7c94"/><use href="#spark" width="8" height="8"/></svg></div>
        <div class="hs d-flex align-items-center">
          <div class="hs-split"></div>
          <div class="hs-th d-flex align-items-center justify-content-center"><svg width="9" height="8" viewBox="0 0 9 8"><path d="M1 1v6M3 1v6M5 1v6M7 1v6" stroke="#8090a8"/></svg></div>
          <div class="hs-right"></div>
          <div class="hs-split2"></div>
        </div>
      </div>
      <div class="xl-status d-flex align-items-center">
        <div class="st-a">Готово</div>
        <div class="st-b d-flex align-items-center">Найдено записей: 6 из 14</div>
        <div class="views d-flex align-items-center">
          <div class="view on d-flex align-items-center justify-content-center"><svg width="14" height="12" viewBox="0 0 14 12"><rect x=".5" y=".5" width="13" height="11" fill="#fff" stroke="#666"/><path d="M1 4h12M1 8h12M5 1v10M9 1v10" stroke="#666"/></svg></div>
          <div class="view d-flex align-items-center justify-content-center"><svg width="14" height="12" viewBox="0 0 14 12"><rect x=".5" y=".5" width="13" height="11" fill="#ccc" stroke="#666"/><rect x="4" y="2" width="6" height="8" fill="#fff" stroke="#888"/></svg></div>
          <div class="view d-flex align-items-center justify-content-center"><svg width="14" height="12" viewBox="0 0 14 12"><rect x=".5" y=".5" width="13" height="11" fill="#ccc" stroke="#666"/><rect x="2" y="1" width="4" height="7" fill="#fff"/><rect x="8" y="1" width="4" height="7" fill="#fff"/></svg></div>
        </div>
        <div class="zoom-t">100%</div>
        <div class="zb">−</div>
        <div class="slider"><span class="thumb"></span></div>
        <div class="zb">+</div>
        <div class="sgrip"></div>
      </div>
    </div>
  </div>

  <!-- taskbar -->
  <div class="taskbar d-flex align-items-center">
    <div class="tb up start d-flex align-items-center justify-content-center">
      <svg width="15" height="14" viewBox="0 0 15 14"><path d="M1 2c2-1 4-1 6 0v5c-2-1-4-1-6 0z" fill="#e8582a"/><path d="M8 2c2 1 4 1 6 0v5c-2 1-4 1-6 0z" fill="#7db93a"/><path d="M1 8c2-1 4-1 6 0v5c-2-1-4-1-6 0z" fill="#3a8ed6"/><path d="M8 8c2 1 4 1 6 0v5c-2 1-4 1-6 0z" fill="#f6c025"/></svg>Пуск
    </div>
    <div class="tb d-flex align-items-center justify-content-center">
      <svg width="32" height="32" viewBox="0 0 32 32"><circle cx="16" cy="17" r="12" fill="#3aa7e6"/><circle cx="16" cy="17" r="7" fill="#d8f1fd"/><rect x="9" y="15" width="16" height="3" fill="#3aa7e6"/><path d="M23 19h7c-1 7-8 11-14 10-4 0-7-2-8-5h7c3 2 6 0 8-5z" fill="#3aa7e6"/><path d="M2 30C0 26 6 14 20 6c5-3 10-4 10-2 1 2-2 5-3 6 0-3-1-4-4-3C14 11 6 22 6 28c0 2-3 4-4 2z" fill="#f5bd1f"/></svg>
    </div>
    <div class="tb up tb-ex d-flex align-items-center justify-content-center">
      <svg width="34" height="30" viewBox="0 0 34 30"><path d="M3 7l10-1 2 2h16v6H3z" fill="#e3c46a" stroke="#a88a33" stroke-width=".6"/><rect x="4" y="2" width="6" height="5" fill="#39b339"/><rect x="13" y="3" width="6" height="5" fill="#d23a3a"/><rect x="22" y="4" width="6" height="5" fill="#3a8fdc"/><path d="M1 11h32l-1 17H2z" fill="#f3e3ae" stroke="#a88a33" stroke-width=".6"/><path d="M10 29V20h14v9h-4v-5h-6v5z" fill="#59b4e3" stroke="#2d7ba8" stroke-width=".6"/></svg>
    </div>
    <div class="tb tb-mp d-flex align-items-center justify-content-center">
      <svg width="32" height="30" viewBox="0 0 32 30"><rect x="8" y="3" width="20" height="24" fill="#9fc4e6" opacity=".7"/><rect x="4" y="1" width="22" height="26" fill="#5a9ad3" stroke="#3e7ab0"/><circle cx="14" cy="14" r="8" fill="#f26a1d" stroke="#fff"/><path d="M11 9l8 5-8 5z" fill="#fff"/></svg>
    </div>
    <div class="tb d-flex align-items-center justify-content-center"><svg width="32" height="32"><use href="#chrome"/></svg></div>
    <div class="tb up d-flex align-items-center justify-content-center"><svg width="32" height="32"><use href="#firefox"/></svg></div>
    <div class="tb up d-flex align-items-center justify-content-center">
      <svg width="32" height="30" viewBox="0 0 32 30"><path d="M2 3l13-2v28L2 27z" fill="#2a5aa8" stroke="#1c3d78"/><rect x="10" y="4" width="21" height="22" fill="#fff" stroke="#8aa5c9"/><text x="12" y="14" font-size="11" font-weight="700" fill="#2a5aa8" font-family="Liberation Sans,sans-serif">W</text><path d="M23 7h6M23 10h6M23 13h6M13 17h16M13 20h16M13 23h16" stroke="#2a5aa8"/></svg>
    </div>
    <div class="tb down d-flex align-items-center justify-content-center">
      <svg width="32" height="32" viewBox="0 0 32 32"><path d="M4 5c6-3 14-4 24-2v26H6z" fill="#fff" stroke="#3f9a3f" stroke-width="1.200"/><path d="M4 13l12-2v14l-12 2z" fill="#2c6e2c"/><text x="6" y="23" font-size="12" font-weight="700" fill="#fff" font-family="Liberation Sans,sans-serif">X</text><path d="M18 12h4v3h-4zM23 12h4v3h-4zM18 16h4v3h-4zM23 16h4v3h-4zM18 20h4v3h-4zM23 20h4v3h-4z" fill="#6eae5a"/></svg>
    </div>
    <div class="lang">RU</div>
    <div class="tray d-flex align-items-center">
      <svg width="16" height="16" viewBox="0 0 16 16"><rect width="16" height="16" rx="1" fill="#dd6312"/><path d="M4 12h8M4 14h6" stroke="#fff"/><path d="M8 2c-2 3 2 4 0 7M11 4c-1 2 1 3 0 5" stroke="#fff" fill="none"/></svg>
      <svg width="16" height="16" viewBox="0 0 16 16"><rect x="2" y="3" width="10" height="13" fill="#8fc4e8"/><circle cx="8" cy="6" r="4" fill="#fff" stroke="#f1a51e"/><path d="M6 4h2v2H6z" fill="#d9442e"/><path d="M8 4h2v2H8z" fill="#5aa83a"/><path d="M6 6h2v2H6z" fill="#3a8ed6"/><path d="M8 6h2v2H8z" fill="#f1c21e"/></svg>
      <svg width="16" height="16" viewBox="0 0 16 16"><rect width="16" height="16" rx="1" fill="#2b2f2c"/><path d="M2 9c2-4 8-5 11-2-2 3-6 4-9 3" fill="none" stroke="#76b900" stroke-width="1.400"/><rect x="13" y="9" width="2" height="5" fill="#ffd400"/></svg>
      <svg width="16" height="16" viewBox="0 0 16 16"><circle cx="8" cy="8" r="8" fill="#555"/><path d="M12 8a4 4 0 1 1-1.500-3.100" fill="none" stroke="#eee" stroke-width="2"/><path d="M9 2l4 1-1 4z" fill="#eee"/></svg>
      <svg width="16" height="16" viewBox="0 0 16 16"><path d="M1 5h3l5-4v14l-5-4H1z" fill="#e8492e" stroke="#8f2413" stroke-width=".6"/><path d="M11 5c1 2 1 4 0 6M13 3c2 3 2 7 0 10" fill="none" stroke="#333"/></svg>
      <svg width="16" height="16" viewBox="0 0 16 16"><path d="M3 1h8l3 3v11H3z" fill="#f5f1e6" stroke="#999"/><circle cx="8" cy="7" r="3" fill="none" stroke="#d8701c" stroke-width="1.800"/><path d="M6 9l-3 4" stroke="#d8701c" stroke-width="2"/></svg>
      <svg width="16" height="16" viewBox="0 0 16 16"><path d="M2 1v15" stroke="#888" stroke-width="1.400"/><path d="M3 2h6l1 2h5l-2 3 2 3H8L7 8H3z" fill="#fff" stroke="#aaa" stroke-width=".5"/></svg>
      <svg width="16" height="16" viewBox="0 0 16 16"><rect x="5" y="3" width="11" height="9" fill="#dcdcdc" stroke="#666"/><rect x="1" y="1" width="5" height="8" fill="#fff" stroke="#555"/><path d="M8 14h8" stroke="#666" stroke-width="2"/></svg>
      <svg width="16" height="16" viewBox="0 0 16 16"><path d="M1 5h3l5-4v14l-5-4H1z" fill="#ddd" stroke="#888" stroke-width=".6"/><path d="M11 5c1 2 1 4 0 6M13 3c2 3 2 7 0 10" fill="none" stroke="#888"/></svg>
      <div class="clock">14:18<br>25.10.2019</div>
      <svg width="16" height="13" viewBox="0 0 16 13"><rect width="16" height="13" fill="#3a76c4"/><rect y="9" width="16" height="4" fill="#26334a"/><rect x="2" y="9" width="3" height="2" fill="#7db93a"/></svg>
    </div>
  </div>
</div>

<script src="https://cdn.jsdelivr.net/npm/bootstrap@5.3.2/dist/js/bootstrap.bundle.min.js"></script>
<script>
  const cols = ["A","B","C","D","E","F","G","H","I","J","K","L","M","N","O","P","Q",""];
  const data = [
    [1, "Фамилия", "Продажи", "Страна", "Квартал"],
    [2, "Агичев", "96 000р.", "Россия", "Кв. 3"],
    [3, "Ахмедов", "11 000р.", "Россия", "Кв. 1"],
    [5, "Горбачев", "25 000р.", "Россия", "Кв. 2"],
    [12, "Лим", "34 000р.", "Россия", "Кв. 1"],
    [13, "Лим", "150 000р.", "Россия", "Кв. 3"],
    [15, "Хизреева", "21 000р.", "Россия", "Кв. 3"]
  ];
  for (let n = 16; n <= 34; n++) data.push([n]);

  let html = '<div class="hc" id="corner"></div>';
  for (const c of cols) html += `<div class="hc ${c === "G" ? "hsel" : ""}">${c}</div>`;
  data.forEach((row, idx) => {
    const n = row[0];
    let cls = "hr";
    if (idx >= 1 && idx <= 6) cls += " blue";
    if (n === 3 || n === 5 || n === 13 || n === 15) cls += " jump";
    if (n === 16) cls = "hr hsel";
    html += `<div class="${cls}">${n}</div>`;
    for (let i = 0; i < 18; i++) {
      let k = "c";
      const inTable = idx <= 6 && i < 4;
      if (i === 0) k += " m";
      if (i === 1 && idx > 0) k += " r";
      if (idx === 0 && i < 4) k += " bold";
      if (inTable && i === 3) k += " bk-r";
      if (idx === 6 && i < 4) k += " bk-b";
      if (n === 16 && i === 6) k += " sel";
      let inner = inTable ? row[i + 1] : "";
      if (idx === 0 && i < 4) inner += `<span class="fb ${i === 2 ? "on" : ""}">${i === 2 ? '<svg width="15" height="15" viewBox="0 0 16 16" class="d-block"><use href="#funnel" width="10" height="11" x="6" y="2"/><path d="M1 10h6l-3 3z" fill="#2f4f9e"/></svg>' : ""}</span>`;
      html += `<div class="${k}">${inner}</div>`;
    }
  });
  document.getElementById("grid").innerHTML = html;
  document.getElementById("corner").innerHTML = '<svg width="25" height="18" viewBox="0 0 25 18" class="d-block"><path d="M21 3v13H7z" fill="#b7c9e2"/></svg>';
</script>
</body>
</html>
